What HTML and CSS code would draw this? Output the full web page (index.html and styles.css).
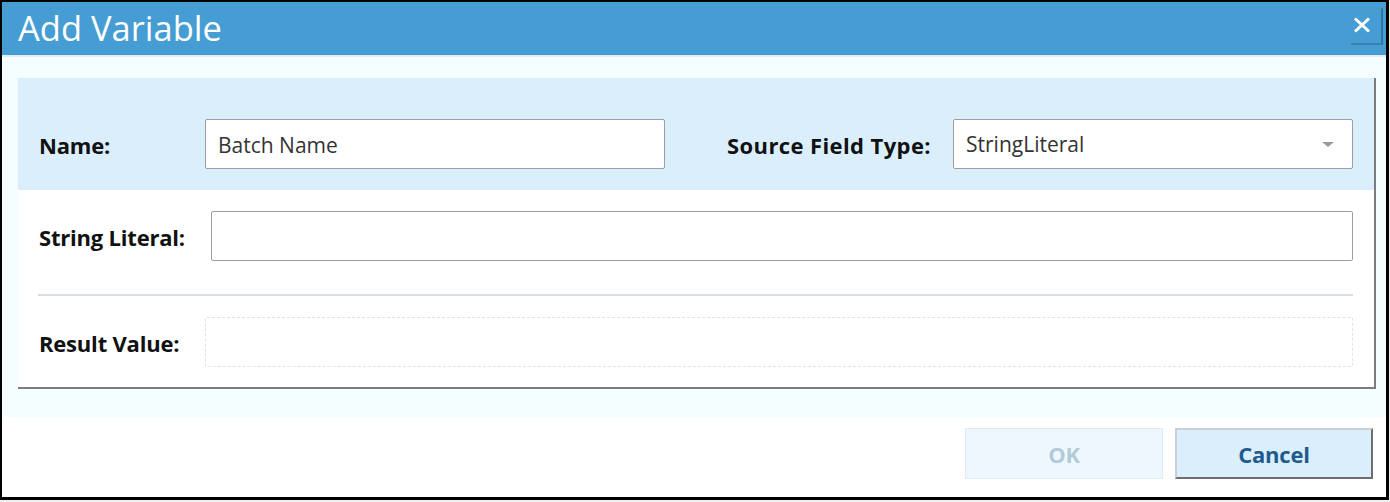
FILE: index.html
```html
<!DOCTYPE html>
<html lang="en">
<head>
    <meta charset="UTF-8">
    <title>Add Variable</title>
    <link rel="stylesheet" href="styles.css">
</head>
<body>
    <div class="dialog">
        <div class="title-bar">
            <h1 class="title">Add Variable</h1>
            <button class="close-button" aria-label="Close">
                <svg width="18" height="16" viewBox="0 0 18 16">
                    <path d="M2 1.5 L16 14.5 M16 1.5 L2 14.5" stroke="#fff" stroke-width="3" fill="none"/>
                </svg>
            </button>
        </div>

        <div class="content">
            <div class="panel">
                <div class="panel-top">
                    <label class="label name-label">Name:</label>
                    <div class="field name-field">Batch Name</div>
                    <label class="label source-label">Source Field Type:</label>
                    <div class="field select-field">
                        <span>StringLiteral</span>
                        <span class="arrow"></span>
                    </div>
                </div>

                <div class="panel-body">
                    <div class="row">
                        <label class="label literal-label">String Literal:</label>
                        <div class="field wide-field"></div>
                    </div>
                    <div class="separator"></div>
                    <div class="row">
                        <label class="label result-label">Result Value:</label>
                        <div class="result-box"></div>
                    </div>
                </div>
            </div>
        </div>

        <div class="footer">
            <button class="button ok-button" disabled>OK</button>
            <button class="button cancel-button">Cancel</button>
        </div>
    </div>
</body>
</html>
```

FILE: styles.css
```css
body {
    margin: 0;
    background-color: #f0f0f0;
    font-family: 'Open Sans', 'Noto Sans', sans-serif;
}

.dialog {
    box-sizing: border-box;
    width: 1389px;
    height: 500px;
    border-style: solid;
    border-color: #000;
    border-width: 2px 3px 3px 2px;
    background-color: #fff;
    display: flex;
    flex-direction: column;
}

/* title */
.title-bar {
    height: 53px;
    background-color: #459dd3;
    border-bottom: 2px solid #e4edf2;
    display: flex;
    justify-content: space-between;
    align-items: flex-start;
    padding-left: 16px;
}
.title {
    margin: 0;
    font-weight: normal;
    font-size: 34.5px;
    line-height: 52px;
    color: #fff;
}
.close-button {
    box-sizing: border-box;
    width: 32px;
    height: 37px;
    margin: 6px 3px 0 0;
    padding: 0 10px 2px 2px;
    background-color: #459dd3;
    border: none;
    border-right: 2px solid #33739f;
    border-bottom: 2px solid #3a7fad;
    border-top: 1px solid #4d98c8;
    display: flex;
    align-items: center;
    justify-content: center;
}

/* content */
.content {
    background-color: #f4fdff;
    padding: 21px 10px 28px 16px;
}
.panel {
    border-right: 2px solid #7d7d7d;
    border-bottom: 2px solid #7d7d7d;
    background-color: #fff;
}
.panel-top {
    height: 112px;
    box-sizing: border-box;
    background-color: #dbeefc;
    padding: 41px 21px 0 21px;
    display: flex;
    align-items: flex-start;
}
.label {
    font-weight: bold;
    font-size: 22px;
    color: #111;
    height: 50px;
    line-height: 52px;
    white-space: nowrap;
    letter-spacing: -0.2px;
}
.name-label {
    width: 166px;
}
.source-label {
    margin-left: auto;
    margin-right: 22px;
    letter-spacing: 0.4px;
}
.field {
    box-sizing: border-box;
    height: 50px;
    border: 1px solid #9e9e9e;
    border-radius: 2px;
    background-color: #fff;
    font-size: 21px;
    color: #333;
    line-height: 50px;
    padding: 0 12px;
}
.name-field {
    width: 460px;
}
.select-field {
    width: 400px;
    display: flex;
    justify-content: space-between;
    align-items: center;
    padding-right: 18px;
}
.arrow {
    width: 0;
    height: 0;
    border-left: 6px solid transparent;
    border-right: 6px solid transparent;
    border-top: 5px solid #9a9a9a;
}

.panel-body {
    padding: 21px 21px 20px 21px;
}
.row {
    display: flex;
    align-items: flex-start;
}
.literal-label {
    width: 172px;
}
.wide-field {
    flex: 1;
}
.result-label {
    width: 166px;
}
.separator {
    height: 2px;
    background-color: #d8dfe3;
    margin: 33px 0 21px -1px;
}
.result-box {
    flex: 1;
    box-sizing: border-box;
    height: 50px;
    border: 1px dashed #e2e2e2;
    border-radius: 2px;
}

/* footer */
.footer {
    flex: 1;
    display: flex;
    justify-content: flex-end;
    align-items: flex-start;
    gap: 12px;
    padding: 11px 13px 0 0;
}
.button {
    box-sizing: border-box;
    width: 198px;
    height: 51px;
    font-family: 'Open Sans', 'Noto Sans', sans-serif;
    font-weight: bold;
    font-size: 22px;
    letter-spacing: -0.2px;
}
.ok-button {
    background-color: #eef7fd;
    border: 1px solid #e0ebf2;
    color: #b3cad9;
}
.cancel-button {
    background-color: #dbeefc;
    border-style: solid;
    border-width: 2px 2px 2px 2px;
    border-color: #c8cfd6 #6e6e6e #6e6e6e #c8cfd6;
    color: #1f5c8e;
}
```
